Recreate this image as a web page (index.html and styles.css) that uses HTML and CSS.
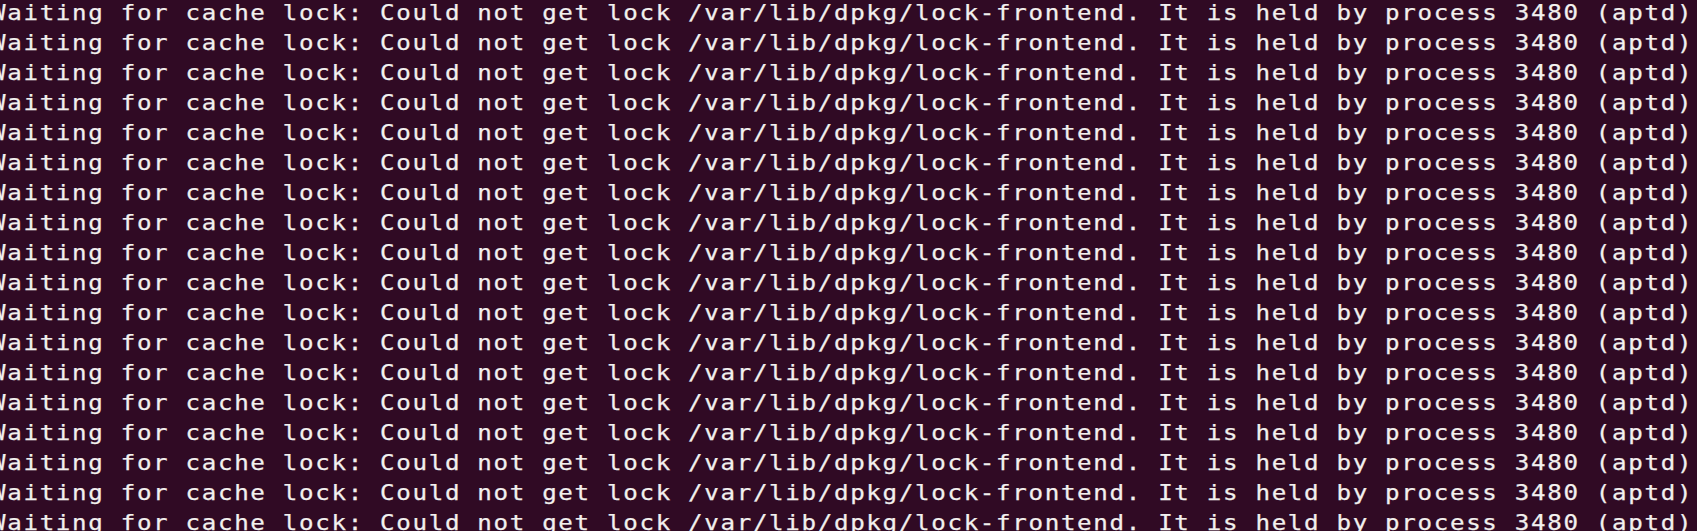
FILE: index.html
```html
<!DOCTYPE html>
<html>
<head>
<meta charset="utf-8">
<link rel="stylesheet" href="styles.css">
</head>
<body>
<div class="terminal">
<div class="line">Waiting for cache lock: Could not get lock /var/lib/dpkg/lock-frontend. It is held by process 3480 (aptd)</div>
<div class="line">Waiting for cache lock: Could not get lock /var/lib/dpkg/lock-frontend. It is held by process 3480 (aptd)</div>
<div class="line">Waiting for cache lock: Could not get lock /var/lib/dpkg/lock-frontend. It is held by process 3480 (aptd)</div>
<div class="line">Waiting for cache lock: Could not get lock /var/lib/dpkg/lock-frontend. It is held by process 3480 (aptd)</div>
<div class="line">Waiting for cache lock: Could not get lock /var/lib/dpkg/lock-frontend. It is held by process 3480 (aptd)</div>
<div class="line">Waiting for cache lock: Could not get lock /var/lib/dpkg/lock-frontend. It is held by process 3480 (aptd)</div>
<div class="line">Waiting for cache lock: Could not get lock /var/lib/dpkg/lock-frontend. It is held by process 3480 (aptd)</div>
<div class="line">Waiting for cache lock: Could not get lock /var/lib/dpkg/lock-frontend. It is held by process 3480 (aptd)</div>
<div class="line">Waiting for cache lock: Could not get lock /var/lib/dpkg/lock-frontend. It is held by process 3480 (aptd)</div>
<div class="line">Waiting for cache lock: Could not get lock /var/lib/dpkg/lock-frontend. It is held by process 3480 (aptd)</div>
<div class="line">Waiting for cache lock: Could not get lock /var/lib/dpkg/lock-frontend. It is held by process 3480 (aptd)</div>
<div class="line">Waiting for cache lock: Could not get lock /var/lib/dpkg/lock-frontend. It is held by process 3480 (aptd)</div>
<div class="line">Waiting for cache lock: Could not get lock /var/lib/dpkg/lock-frontend. It is held by process 3480 (aptd)</div>
<div class="line">Waiting for cache lock: Could not get lock /var/lib/dpkg/lock-frontend. It is held by process 3480 (aptd)</div>
<div class="line">Waiting for cache lock: Could not get lock /var/lib/dpkg/lock-frontend. It is held by process 3480 (aptd)</div>
<div class="line">Waiting for cache lock: Could not get lock /var/lib/dpkg/lock-frontend. It is held by process 3480 (aptd)</div>
<div class="line">Waiting for cache lock: Could not get lock /var/lib/dpkg/lock-frontend. It is held by process 3480 (aptd)</div>
<div class="line">Waiting for cache lock: Could not get lock /var/lib/dpkg/lock-frontend. It is held by process 3480 (aptd)</div>
</div>
</body>
</html>
```

FILE: styles.css
```css
html, body {
  margin: 0;
  padding: 0;
  background: #300a24;
  height: 100%;
  overflow: hidden;
}

.terminal {
  display: flex;
  flex-direction: column;
  margin: -2px 0 0 -9.36px;
  font-family: "DejaVu Sans Mono", monospace;
  font-size: 21px;
  line-height: 30px;
  letter-spacing: 1.453px;
  color: #f2f0ee;
  -webkit-text-stroke: 0.25px #f2f0ee;
  transform: scaleX(1.15);
  transform-origin: 0 0;
}

.line {
  height: 30px;
  white-space: pre;
}
```
